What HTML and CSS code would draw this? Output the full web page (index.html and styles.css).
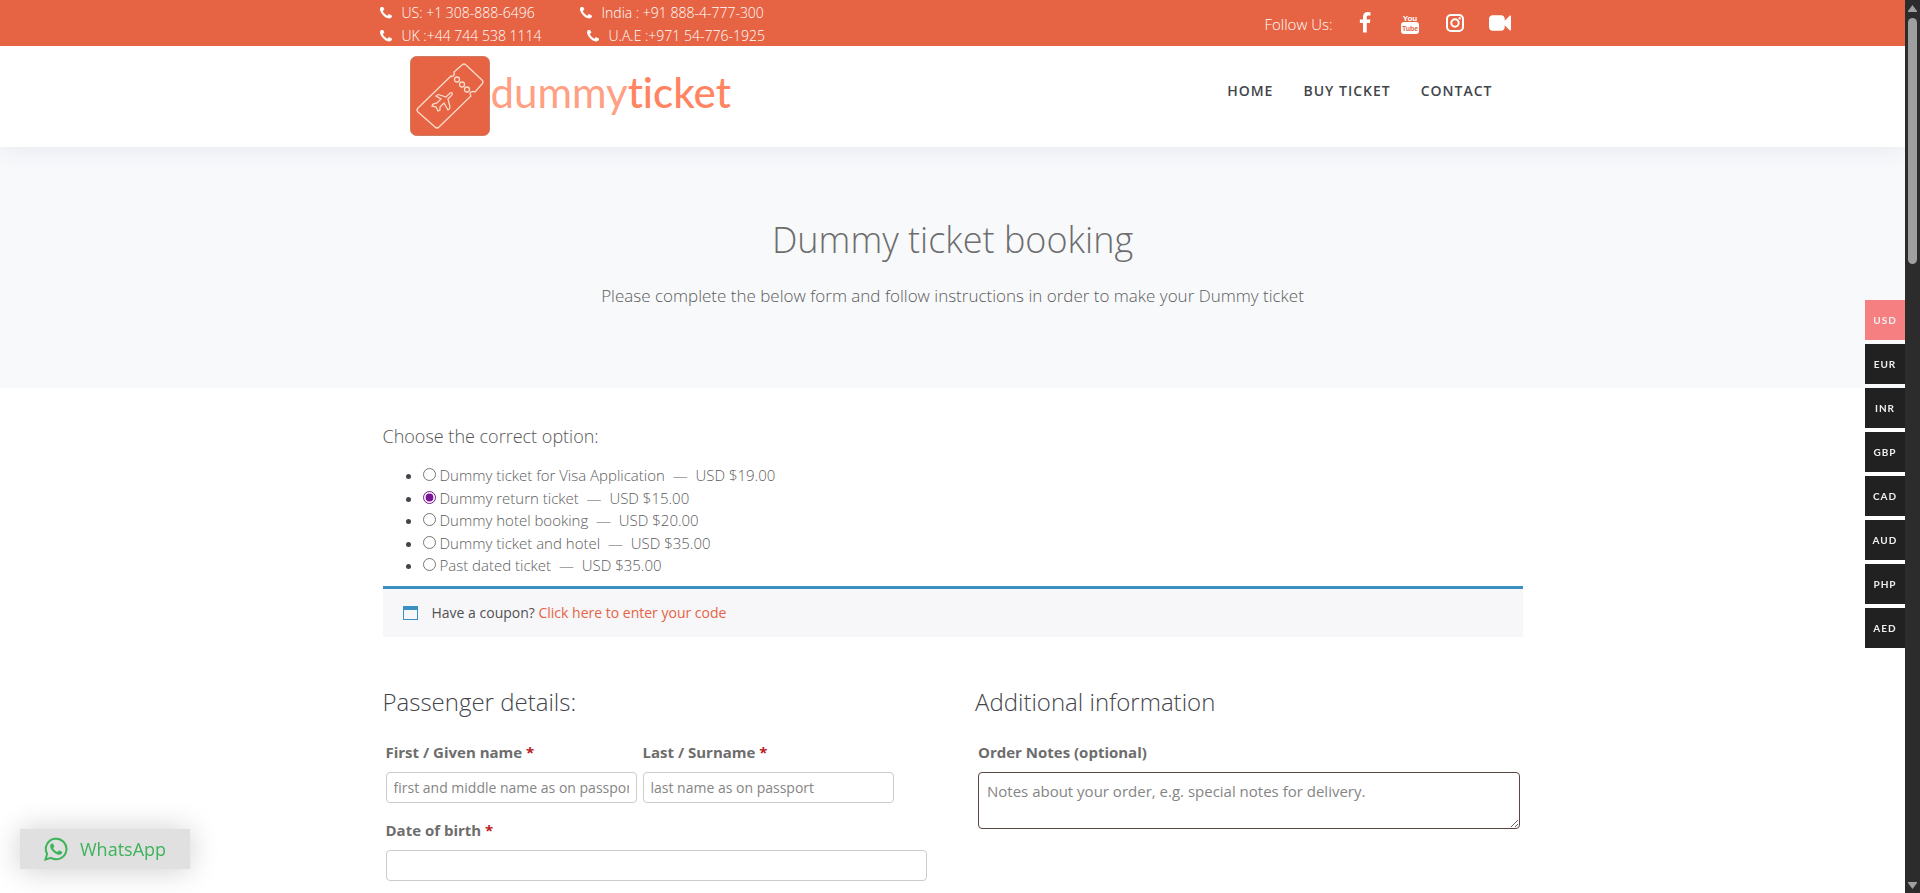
FILE: index.html
```html
<!DOCTYPE html>
<html lang="en">
<head>
<meta charset="utf-8">
<meta name="viewport" content="width=device-width, initial-scale=1">
<title>Dummy ticket booking</title>
<link rel="stylesheet" href="styles.css">
</head>
<body>
<svg class="defs" aria-hidden="true">
  <symbol id="phone" viewBox="192 192 1408 1408"><path d="M1600 1240q0 27-10 70.500t-21 68.500q-21 50-122 106-94 51-186 51-27 0-53-3.500t-57-12.500-47-14.500-55.500-20.500-49.500-18q-98-35-175-83-127-79-264-216t-216-264q-48-77-83-175-3-9-18-49.500t-20.500-55.500-14.500-47-12.500-57-3.500-53q0-92 51-186 56-101 106-122 25-11 68.500-21t70.500-10q14 0 21 3 18 6 53 76 11 19 30 54t35 63.500 31 53.500q3 4 17.500 25t21.500 35.500 7 28.500q0 20-28.500 50t-62 55-62 53-28.500 46q0 9 5 22.500t8.500 20.500 14 24 11.500 19q76 137 174 235t235 174q2 1 19 11.500t24 14 20.500 8.500 22.500 5q18 0 46-28.500t53-62 55-62 50-28.500q14 0 28.500 7t35.500 21.500 25 17.500q25 15 53.500 31t63.500 35 54 30q70 35 76 53 3 7 3 21z"/></symbol>
</svg>

<div class="topbar">
  <div class="container topbar-inner">
    <div class="phones">
      <div class="phone-row">
        <span class="phone phone-a"><svg class="phone-icon"><use href="#phone"/></svg>US: +1 308-888-6496</span>
        <span class="phone"><svg class="phone-icon"><use href="#phone"/></svg>India : +91 888-4-777-300</span>
      </div>
      <div class="phone-row">
        <span class="phone phone-b"><svg class="phone-icon"><use href="#phone"/></svg>UK :+44 744 538 1114</span>
        <span class="phone"><svg class="phone-icon"><use href="#phone"/></svg>U.A.E :+971 54-776-1925</span>
      </div>
    </div>
    <div class="social">
      <span>Follow Us:</span>
      <ul class="social-links">
        <li><a href="#" aria-label="Facebook"><svg viewBox="0 0 1792 1792"><path d="M1343 12v264h-157q-86 0-116 36t-30 108v189h293l-39 296h-254v759h-306v-759h-255v-296h255v-218q0-186 104-288.500t277-102.500q147 0 228 12z"/></svg></a></li>
        <li><a href="#" aria-label="YouTube"><svg viewBox="0 0 22 22"><rect x="2" y="10" width="18" height="12" rx="3"/><text class="yt-you" x="11" y="9" text-anchor="middle">You</text><text class="yt-tube" x="11" y="19" text-anchor="middle">Tube</text></svg></a></li>
        <li><a href="#" aria-label="Instagram"><svg viewBox="0 0 22 22"><rect class="line" x="3" y="3" width="16" height="16" rx="4"/><circle class="line" cx="11" cy="11" r="3.700"/><circle cx="15.700" cy="6.300" r="1.200"/></svg></a></li>
        <li><a href="#" aria-label="Video"><svg viewBox="0 0 1792 1792"><path d="M1792 352v1088q0 42-39 59-13 5-25 5-27 0-45-19l-403-403v166q0 119-84.500 203.500t-203.500 84.500h-704q-119 0-203.500-84.500t-84.500-203.500v-704q0-119 84.500-203.500t203.500-84.500h704q119 0 203.500 84.500t84.500 203.500v165l403-402q18-19 45-19 12 0 25 5 39 17 39 59z"/></svg></a></li>
      </ul>
    </div>
  </div>
</div>

<header class="header">
  <div class="container header-inner">
    <a class="logo" href="#">
      <svg class="logo-mark" viewBox="0 0 80 80" aria-hidden="true">
        <rect class="logo-bg" x=".5" y=".5" width="79" height="79" rx="6"/>
        <path d="M41 20L8 52q-2 2 0 4l17 15q2 2 4 0L61 40q-2-3 0-4q2-1 4 0L72 28q2-2 0-4L56 9q-2-2-4 0L44 16q1 3-1 4q-1 1-2 0z"/>
        <circle cx="47" cy="23.500" r="2.500"/><circle cx="52" cy="28.500" r="2.500"/><circle cx="57" cy="33.500" r="2.500"/>
        <path d="M26 40q2-2 4-1l6 2l4-4q3-1 2 2l-4 4l2 8q0 2-2 3l-4-7l-4 4v3l-2 1l-2-4l-4-1l1-2l4-1l4-4z"/>
      </svg>
      <span class="logo-light">dummy<span class="logo-strong">ticket</span></span>
    </a>
    <nav class="nav">
      <a href="#">HOME</a>
      <a href="#">BUY TICKET</a>
      <a href="#">CONTACT</a>
    </nav>
  </div>
</header>

<section class="banner">
  <h1>Dummy ticket booking</h1>
  <p>Please complete the below form and follow instructions in order to make your Dummy ticket</p>
</section>

<main class="container main">
  <form>
    <h2 class="choose" id="choose">Choose the correct option:</h2>
    <ul class="options" role="radiogroup" aria-labelledby="choose">
      <li><label><input type="radio" name="product">Dummy ticket for Visa Application &nbsp;—&nbsp; USD $19.00</label></li>
      <li><label><input type="radio" name="product" checked>Dummy return ticket &nbsp;—&nbsp; USD $15.00</label></li>
      <li><label><input type="radio" name="product">Dummy hotel booking &nbsp;—&nbsp; USD $20.00</label></li>
      <li><label><input type="radio" name="product">Dummy ticket and hotel &nbsp;—&nbsp; USD $35.00</label></li>
      <li><label><input type="radio" name="product">Past dated ticket &nbsp;—&nbsp; USD $35.00</label></li>
    </ul>
    <div class="coupon">
      <svg viewBox="0 0 15 14" aria-hidden="true"><path d="M0 0h15v14H0zM1 4v9h13V4z" fill-rule="evenodd"/></svg>
      <span>Have a coupon? <a href="#">Click here to enter your code</a></span>
    </div>
    <div class="columns">
      <section>
        <h3>Passenger details:</h3>
        <div class="fields">
          <div class="names">
            <div class="field"><label for="first">First / Given name <abbr>*</abbr></label><input id="first" type="text" placeholder="first and middle name as on passport"></div>
            <div class="field"><label for="last">Last / Surname <abbr>*</abbr></label><input id="last" type="text" placeholder="last name as on passport"></div>
          </div>
          <div class="field"><label for="dob">Date of birth <abbr>*</abbr></label><input id="dob" type="text"></div>
        </div>
      </section>
      <section>
        <h3>Additional information</h3>
        <div class="fields">
          <div class="field"><label for="notes">Order Notes (optional)</label><textarea id="notes" placeholder="Notes about your order, e.g. special notes for delivery."></textarea></div>
        </div>
      </section>
    </div>
  </form>
</main>

<div class="currencies">
  <button type="button" class="active">USD</button>
  <button type="button">EUR</button>
  <button type="button">INR</button>
  <button type="button">GBP</button>
  <button type="button">CAD</button>
  <button type="button">AUD</button>
  <button type="button">PHP</button>
  <button type="button">AED</button>
</div>

<a class="whatsapp" href="#">
  <svg viewBox="0 0 24 24" aria-hidden="true"><path class="ring" d="M1.500 22.500L3.100 16.900A10.300 10.300 0 1 1 7 20.900z"/><path d="M17.500 14.400c-.3-.2-1.800-.9-2-1-.3-.1-.5-.1-.7.200l-.9 1.100c-.2.200-.4.200-.7.100-.3-.2-1.200-.5-2.300-1.400-.9-.8-1.400-1.700-1.600-2-.2-.3 0-.5.100-.6l.5-.5.300-.5v-.5L9.300 7c-.2-.6-.5-.5-.7-.5H8c-.2 0-.5.100-.8.400-.3.300-1 1-1 2.500 0 1.400 1.100 2.800 1.200 3 .1.200 2.100 3.200 5.100 4.500 2.500 1 3 .8 3.500.7.600 0 1.800-.7 2-1.400.3-.7.300-1.300.2-1.400z"/></svg>
  <span>WhatsApp</span>
</a>

<div class="scrollbar" aria-hidden="true">
  <svg viewBox="0 0 9 7"><path d="M4.500 0L9 6v1H0V6z"/></svg>
  <div class="track"><div class="thumb"></div></div>
  <svg viewBox="0 0 9 7"><path d="M4.500 7L9 1V0H0v1z"/></svg>
</div>
</body>
</html>
```
FILE: styles.css
```css
* { box-sizing: border-box; }

body {
  margin: 0;
  padding-right: 15px;
  background: #fff;
  color: #43454b;
  font-family: "Open Sans", sans-serif;
  font-size: 15px;
  font-weight: 300;
  line-height: 1.5;
}

a { color: inherit; text-decoration: none; }
ul { margin: 0; padding: 0; list-style: none; }
.defs { display: none; }

.container { max-width: 1140px; margin: 0 auto; }

/* top bar */
.topbar { position: relative; z-index: 1; background: #e66443; color: #fff; }
.topbar-inner { display: flex; justify-content: space-between; }
.phones { margin-left: -3px; font-size: 14px; line-height: 23px; }
.phone-row { display: flex; }
.phone { display: flex; align-items: center; gap: 10px; padding-top: 2px; height: 23px; }
.phone-a { width: 200px; }
.phone-b { width: 207px; }
.phone-icon { width: 12px; height: 12px; fill: #fff; }
.social { display: flex; align-items: center; gap: 21px; padding-top: 3px; }
.social-links { display: flex; gap: 23px; margin-right: 12px; padding-bottom: 4px; }
.social-links a { display: block; }
.social-links svg { display: block; width: 22px; height: 22px; fill: #fff; }
.social-links .line { fill: none; stroke: #fff; stroke-width: 2; }
.yt-you, .yt-tube { font-family: "Liberation Sans Narrow", "Liberation Sans", sans-serif; font-weight: 700; }
.yt-you { font-size: 8px; fill: #fff; }
.yt-tube { font-size: 7px; fill: #e66443; }

/* header */
.header { position: relative; height: 101px; background: #fff; box-shadow: 0 0 25px rgba(60, 60, 110, 0.1); }
.header-inner { display: flex; justify-content: space-between; padding: 10px 30px 0 27px; }
.logo { display: flex; align-items: center; gap: 1px; }
.logo-mark { width: 80px; height: 80px; fill: none; stroke: #fbdccb; stroke-width: 1.3; }
.logo-bg { fill: #e66443; stroke: #cf7a62; stroke-width: 1; }
.logo-light { padding-bottom: 8px; font-family: Lato, sans-serif; font-size: 42px; font-weight: 400; font-variant-ligatures: none; line-height: 48px; color: #ff9f84; }
.logo-strong { font-weight: 500; color: #ff8562; }
.nav { display: flex; gap: 30px; padding-top: 24px; font-size: 14px; font-weight: 600; letter-spacing: 1px; }

/* banner */
.banner { padding: 66px 20px 79px; background: #f8f9fb; text-align: center; color: #5c5c5c; }
.banner h1 { margin: 0 0 16px; font-size: 36px; font-weight: 300; line-height: 54px; color: #6d6d6d; }
.banner p { margin: 0; font-size: 17px; line-height: 26px; }

/* product options */
.main { padding-top: 35px; }
.choose { margin: 0 0 15px; font-size: 18px; font-weight: 300; line-height: 26px; color: #555; }
.options { margin-bottom: 9px; padding-left: 40px; list-style: disc; }
.options label { color: #5c5c5c; }
.options input { width: 13px; height: 13px; margin: 0 4px 0 0; accent-color: #7a1593; }

.coupon {
  display: flex;
  align-items: center;
  gap: 14px;
  padding: 13px 20px;
  border-top: 3px solid #3a8fc3;
  background: #f7f6f9;
  font-size: 14px;
  font-weight: 400;
  line-height: 22px;
  color: #515151;
}
.coupon svg { width: 15px; height: 14px; fill: #3a8fc3; }
.coupon a { color: #e66443; }

/* checkout form */
.columns { display: grid; grid-template-columns: 1fr 1fr; gap: 45px; margin-top: 48px; }
.columns h3 { margin: 0 0 18px; font-size: 24px; font-weight: 300; line-height: 34px; }
.fields { padding: 0 3px; }
.names { display: grid; grid-template-columns: 251px 251px; gap: 6px; }
.field { display: flex; flex-direction: column; margin-bottom: 12px; }
.field label { margin-bottom: 5px; line-height: 30px; font-weight: 700; color: #6d6d6d; }
.field abbr { color: #b81c23; }
.field input, .field textarea {
  display: block;
  width: 100%;
  border: 1px solid #ccc;
  border-radius: 4px;
  background: #fff;
  font-family: inherit;
  font-weight: 400;
  color: #43454b;
}
.field input { height: 31px; padding: 0 7px; font-size: 14px; }
.field textarea { height: 57px; padding: 7px 8px; border-color: #5a4543; font-size: 15px; line-height: 22px; }
.field ::placeholder { color: #858585; }

/* overlays */
.currencies { position: fixed; top: 300px; right: 15px; display: grid; gap: 4px; }
.currencies button {
  width: 40px;
  height: 40px;
  padding: 0;
  border: 0;
  background: #212121;
  color: #eee;
  font: 700 10px Lato, sans-serif;
  letter-spacing: 1px;
}
.currencies .active { background: #f67f82; }

.whatsapp {
  position: fixed;
  left: 20px;
  bottom: 24px;
  display: flex;
  align-items: center;
  gap: 12px;
  height: 40px;
  padding: 0 24px;
  background: #e0e0e0;
  box-shadow: 0 1px 30px rgba(0, 0, 0, 0.2);
  font-size: 18px;
  font-weight: 400;
  color: #3db35a;
}
.whatsapp svg { width: 24px; height: 24px; fill: #3db35a; }
.whatsapp .ring { fill: none; stroke: #3db35a; stroke-width: 2; }

.scrollbar {
  position: fixed;
  top: 0;
  right: 0;
  bottom: 0;
  display: flex;
  flex-direction: column;
  align-items: center;
  gap: 6px;
  width: 15px;
  padding: 5px 0 4px;
  background: #2c2c2c;
}
.scrollbar svg { width: 9px; height: 7px; fill: #9f9f9f; }
.track { flex: 1; }
.thumb { width: 9px; height: 246px; border-radius: 5px; background: #9f9f9f; }
```
